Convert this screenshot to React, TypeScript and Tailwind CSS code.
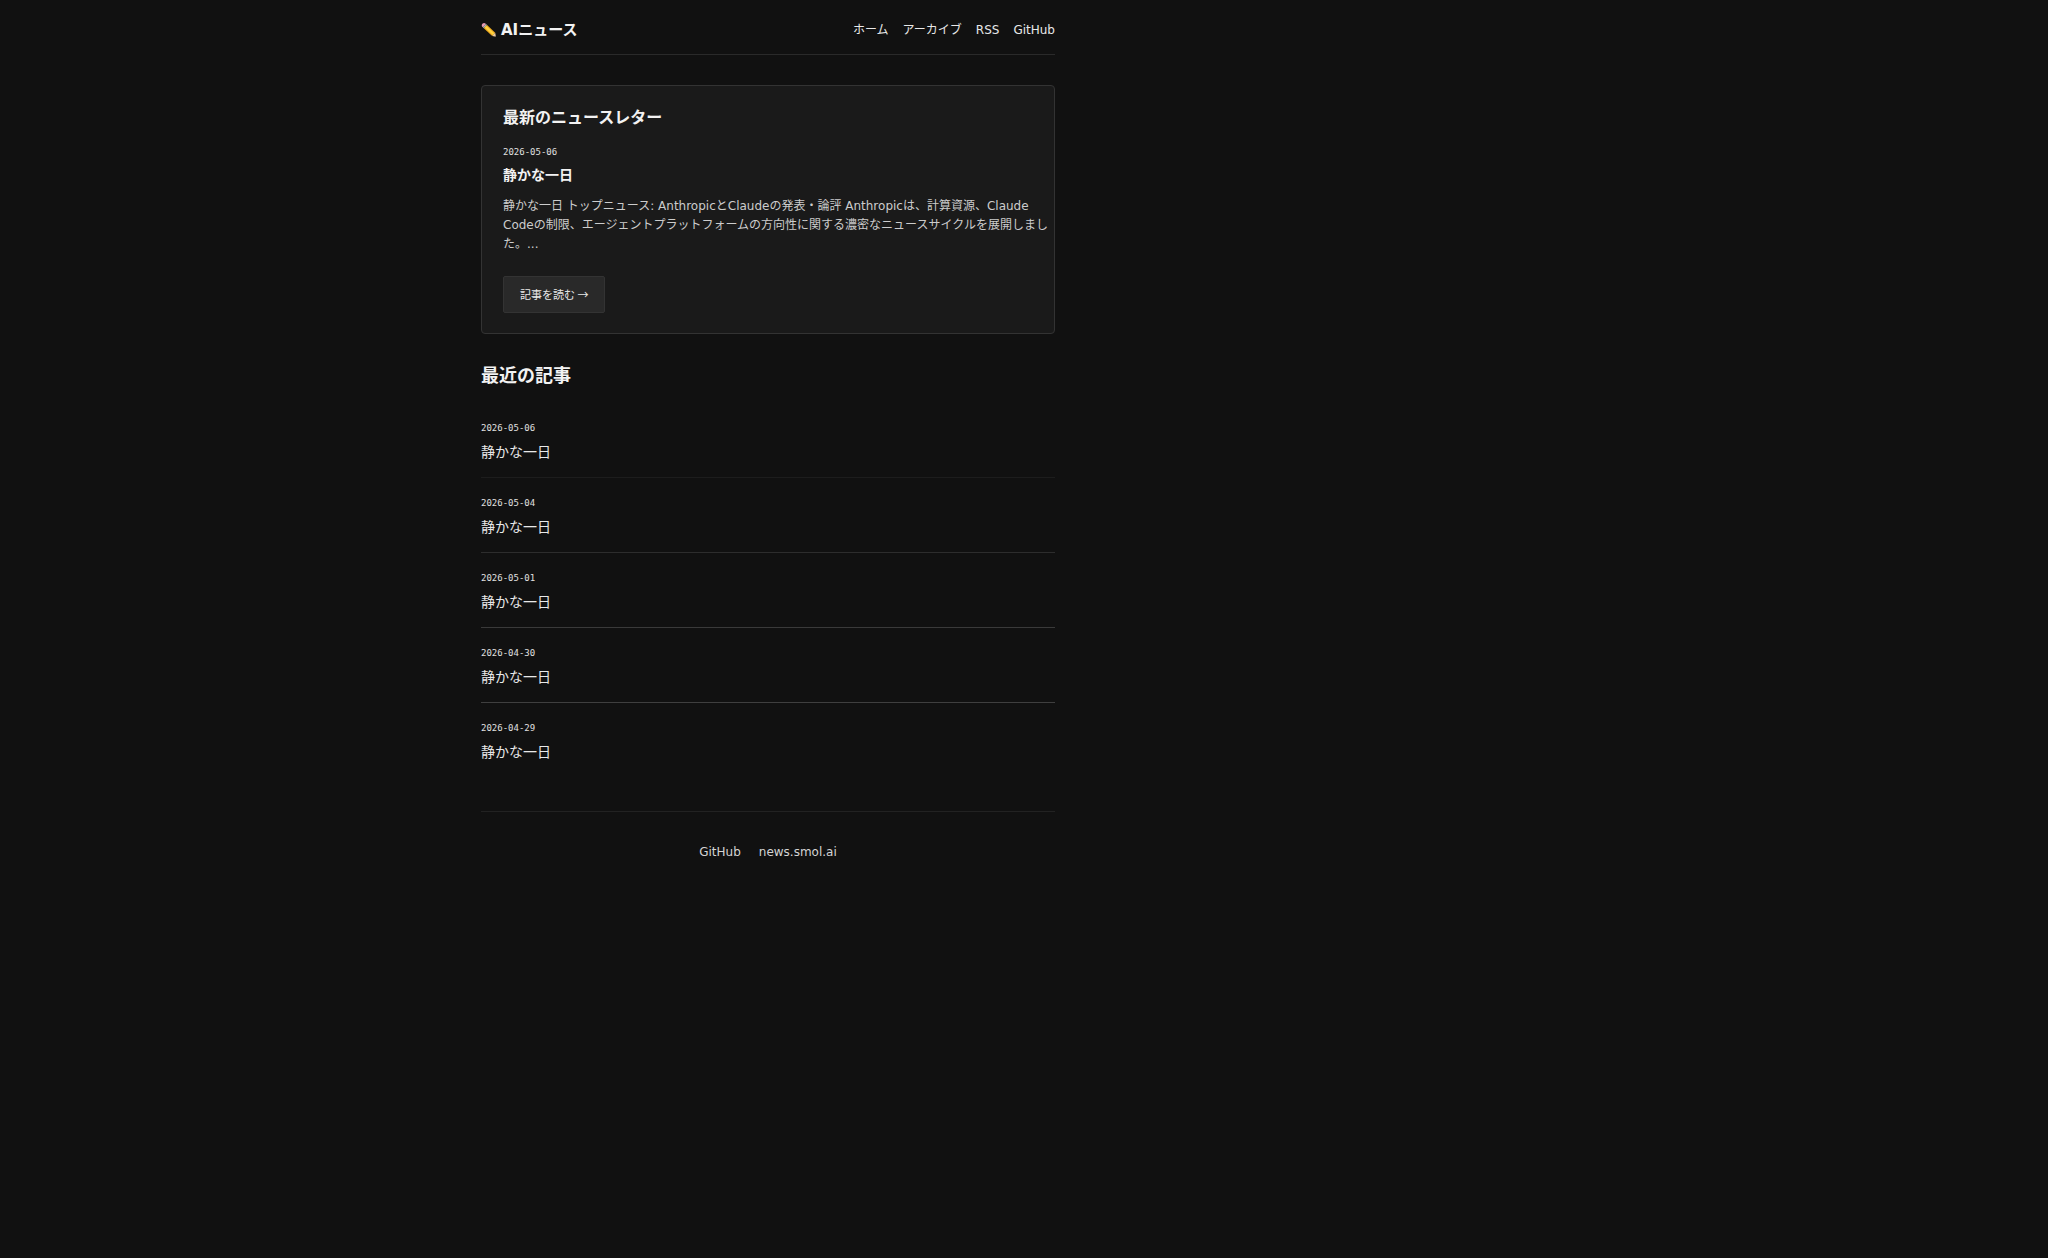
import React from 'react';

interface Article {
  date: string;
  title: string;
  divider: string;
}

const articles: Article[] = [
  { date: '2026-05-06', title: '静かな一日', divider: 'border-b border-[#1d1d1d]' },
  { date: '2026-05-04', title: '静かな一日', divider: 'border-b border-[#2d2d2d]' },
  { date: '2026-05-01', title: '静かな一日', divider: 'border-b border-[#3a3a3a]' },
  { date: '2026-04-30', title: '静かな一日', divider: 'border-b border-[#3f3f3f]' },
  { date: '2026-04-29', title: '静かな一日', divider: '' },
];

const navLinks = [
  { label: 'ホーム', href: '#home' },
  { label: 'アーカイブ', href: '#archive' },
  { label: 'RSS', href: '#rss' },
  { label: 'GitHub', href: '#github' },
];

function PencilIcon() {
  return (
    <svg viewBox="0 0 16 16" className="h-4 w-4" aria-hidden="true">
      <path d="M1 4.6Q0.2 3 1.4 1.8 2.8 0.6 4.4 1.4L5 2 1.8 5.2Z" fill="#e79ab5" />
      <path d="M1.8 5.2 5 2 6.1 3 2.8 6.3Z" fill="#aeb4b8" />
      <path d="M2.8 6.3 6.1 3 14.2 10.8 11.2 13.9Z" fill="#eda91f" />
      <path d="M3.6 5.5 5.3 3.8 13.5 11.6 12 13.1Z" fill="#ffd23f" />
      <path d="M11.2 13.9 14.2 10.8 15 14.8Z" fill="#edc9a0" />
      <path d="M13.8 14.6 14.8 13.6 15 14.8Z" fill="#4a4a4a" />
    </svg>
  );
}

function DateLabel({ date }: { date: string }) {
  return (
    <time dateTime={date} className="block font-['DejaVu_Sans_Mono',monospace] text-[9px] leading-4 text-[#e0e0e0]">
      {date}
    </time>
  );
}

export default function App() {
  return (
    <div className="min-h-screen bg-[#111111] font-['DejaVu_Sans','Noto_Sans_CJK_JP',sans-serif] text-[12px] text-[#e8e8e8]" lang="ja">
      <div className="w-3/4">
        <div className="mx-auto max-w-[574px]">
          <header className="flex h-[55px] items-center justify-between border-b border-[#2a2a2a] pt-1.5">
            <a href="#home" className="flex items-center gap-1 text-[15px] leading-6 font-bold text-[#f2f2f2]">
              <PencilIcon />
              AIニュース
            </a>
            <nav className="flex gap-[14px] leading-5">
              {navLinks.map((link) => (
                <a key={link.label} href={link.href}>{link.label}</a>
              ))}
            </nav>
          </header>

          <main>
            <section className="mt-[30px] rounded border border-[#333333] bg-[#1a1a1a] py-5 pr-1 pl-[21px]">
              <h2 className="text-[16px] leading-6 font-bold text-[#f2f2f2]">最新のニュースレター</h2>
              <div className="mt-[14px]">
                <DateLabel date="2026-05-06" />
              </div>
              <h3 className="mt-[3px] text-[14px] leading-6 font-bold text-[#f2f2f2]">静かな一日</h3>
              <p className="mt-[10px] leading-[19px] text-[#cccccc]">
                静かな一日 トップニュース: AnthropicとClaudeの発表・論評 Anthropicは、計算資源、Claude<br />
                Codeの制限、エージェントプラットフォームの方向性に関する濃密なニュースサイクルを展開しました。...
              </p>
              <a
                href="#article"
                className="mt-[22px] flex h-[37px] w-fit items-center rounded-xs border border-[#333333] bg-[#292929] px-4 font-['Noto_Sans_CJK_JP',sans-serif] text-[11px]"
              >
                記事を読む →
              </a>
            </section>

            <section className="mt-[26px]">
              <h2 className="text-[18px] leading-8 font-bold text-[#f2f2f2]">最近の記事</h2>
              <ul className="mt-[11px]">
                {articles.map((article) => (
                  <li key={article.date} className={`h-[75px] pt-[17px] ${article.divider}`}>
                    <DateLabel date={article.date} />
                    <a href={`#${article.date}`} className="mt-1 block text-[14px] leading-6">{article.title}</a>
                  </li>
                ))}
              </ul>
            </section>
          </main>

          <footer className="mt-[33px] flex justify-center gap-[18px] border-t border-[#222222] pt-[30px] leading-5 text-[#d4d4d4]">
            <a href="#github">GitHub</a>
            <a href="#source">news.smol.ai</a>
          </footer>
        </div>
      </div>
    </div>
  );
}
